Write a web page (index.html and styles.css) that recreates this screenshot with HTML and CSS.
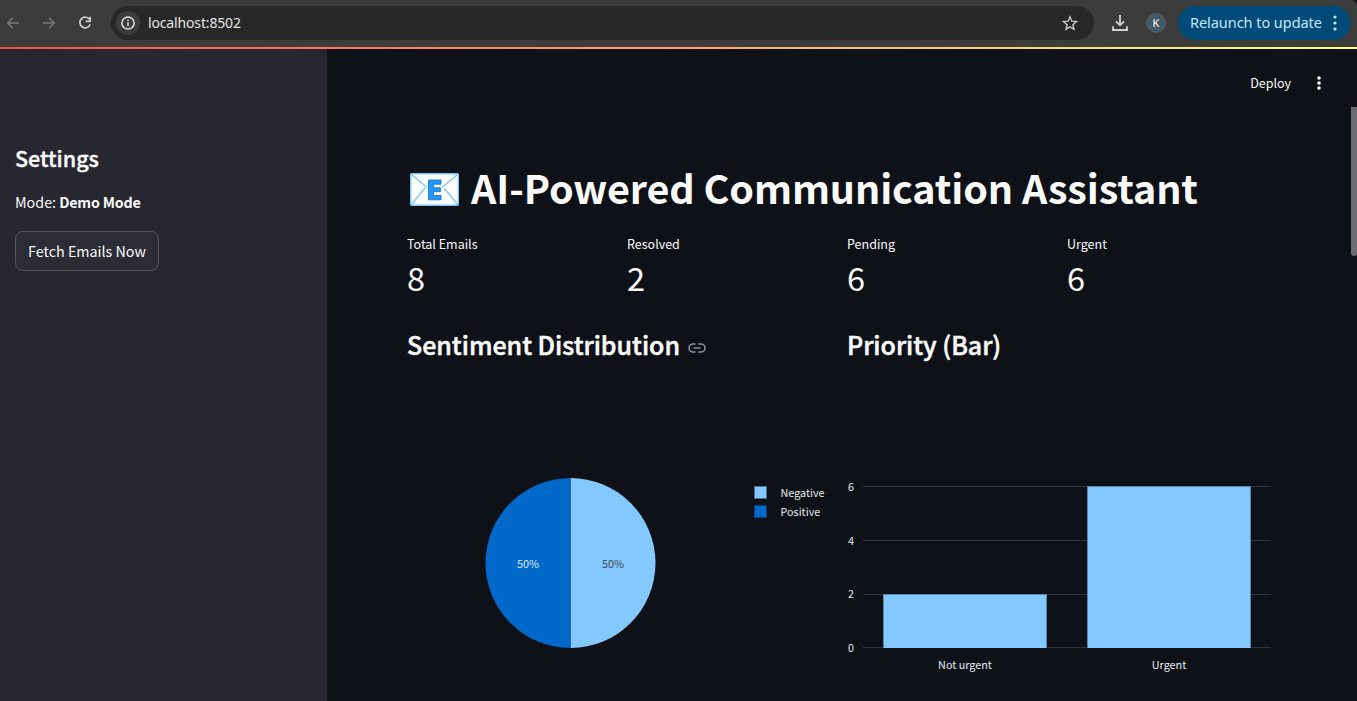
FILE: index.html
```html
<!DOCTYPE html>
<html lang="en">
<head>
<meta charset="utf-8">
<title>AI-Powered Communication Assistant</title>
<link rel="stylesheet" href="styles.css">
</head>
<body>
<header class="browser">
  <svg class="nav-icon" viewBox="0 0 24 24"><path d="M20 12H5M12 5l-7 7 7 7"/></svg>
  <svg class="nav-icon" viewBox="0 0 24 24"><path d="M4 12h15M12 5l7 7-7 7"/></svg>
  <svg class="reload" viewBox="0 0 16 16"><path d="M12.6 4.6A5.3 5.3 0 1 0 13.2 9.2"/><path d="M13.2 1.8v4.6H8.6"/></svg>
  <div class="omnibox">
    <span class="site-info"><svg viewBox="0 0 14 14"><circle cx="7" cy="7" r="6.1"/><path d="M7 6.2v4M7 3.6v1.5"/></svg></span>
    <span class="url">localhost:8502</span>
    <svg class="star" viewBox="0 0 16 16"><path d="M8 1.8l1.8 4.4 4.7.4-3.6 3.1 1.1 4.600L8 11.800l-4 2.500 1.100-4.600L1.500 6.600l4.700-.4z"/></svg>
  </div>
  <svg class="download" viewBox="0 0 16 16"><path d="M8 0v10M4 6.300l4 4 4-4M1 11.300v3.700h14v-3.700"/></svg>
  <span class="avatar"><span class="initial">K</span></span>
  <div class="relaunch"><span class="relaunch-text">Relaunch to update</span><svg class="dots" viewBox="0 0 4 16"><circle cx="2" cy="2" r="1.600"/><circle cx="2" cy="8" r="1.600"/><circle cx="2" cy="14" r="1.600"/></svg></div>
</header>
<div class="decoration"></div>
<div class="app">
  <aside class="sidebar">
    <h2 class="side-title">Settings</h2>
    <p class="mode">Mode: <strong>Demo Mode</strong></p>
    <button class="fetch">Fetch Emails Now</button>
  </aside>
  <main class="main">
    <div class="toolbar"><span class="deploy">Deploy</span><svg class="menu" viewBox="0 0 4 14"><circle cx="2" cy="2" r="1.800"/><circle cx="2" cy="7" r="1.800"/><circle cx="2" cy="12" r="1.800"/></svg></div>
    <div class="content">
      <h1 class="title">
        <svg class="mail" viewBox="0 0 49 33"><rect x=".7" y=".7" width="47.600" height="31.600" rx="1" fill="#fff" stroke="#7cc8f4" stroke-width="1.400"/><path d="M1 1l16 13.500M48 1L32 14.500M1 32l14-17M48 32L34 15" fill="none" stroke="#7cc8f4" stroke-width="1.300"/><path d="M18.500 7H31v4.200h-7.600v3.500h7v4h-7v3.800H31v4.300H18.500z" fill="#2196f3" stroke="#1976d2" stroke-width=".9"/></svg>
        <span class="title-text">AI-Powered Communication Assistant</span>
      </h1>
      <section class="metrics">
        <div><p class="label">Total Emails</p><p class="value">8</p></div>
        <div><p class="label">Resolved</p><p class="value">2</p></div>
        <div><p class="label">Pending</p><p class="value">6</p></div>
        <div><p class="label">Urgent</p><p class="value">6</p></div>
      </section>
      <section class="charts">
        <div class="chart">
          <h2 class="chart-title"><span>Sentiment Distribution</span><svg class="link" viewBox="0 0 18 10"><path d="M7.500 1H5a4 4 0 0 0 0 8h2.500M10.500 1H13a4 4 0 0 1 0 8h-2.500M5.500 5h7"/></svg></h2>
          <svg class="plot" viewBox="0 0 424 306">
            <path d="M163.500 103a85 85 0 0 0 0 170z" fill="#0068c9"/>
            <path d="M163.500 103a85 85 0 0 1 0 170z" fill="#83c9ff"/>
            <path d="M163.500 103v170" stroke="#2b6cae"/>
            <text class="tick pct-light" x="121" y="193" text-anchor="middle">50%</text>
            <text class="tick pct-dark" x="206" y="193" text-anchor="middle">50%</text>
            <rect x="347.500" y="111.500" width="12" height="12" fill="#83c9ff" stroke="#49708f"/>
            <rect x="347.500" y="130.500" width="12" height="12" fill="#0068c9" stroke="#074079"/>
            <text class="tick" x="373.500" y="122">Negative</text>
            <text class="tick" x="373.500" y="141">Positive</text>
          </svg>
        </div>
        <div class="chart">
          <h2 class="chart-title"><span>Priority (Bar)</span></h2>
          <svg class="plot" viewBox="0 0 424 306">
            <path d="M16 111.500h408M16 165.500h408M16 219.500h408M16 272.500h408" stroke="#31333f"/>
            <path d="M36 219h164v54H36zM240 111h164v162H240z" fill="#83c9ff"/>
            <path d="M36.500 273v-53.500h163V273M240.500 273V111.500h163V273" fill="none" stroke="#5584a9"/>
            <text class="tick" x="7" y="116" text-anchor="end">6</text>
            <text class="tick" x="7" y="170" text-anchor="end">4</text>
            <text class="tick" x="7" y="223" text-anchor="end">2</text>
            <text class="tick" x="7" y="277" text-anchor="end">0</text>
            <text class="tick" x="118" y="294" text-anchor="middle">Not urgent</text>
            <text class="tick" x="322" y="294" text-anchor="middle">Urgent</text>
          </svg>
        </div>
      </section>
    </div>
    <div class="scrollbar"></div>
  </main>
</div>
</body>
</html>
```
FILE: styles.css
```css
* { box-sizing: border-box; margin: 0; padding: 0; }
body { width: 1357px; height: 701px; overflow: hidden; display: flex; flex-direction: column; background: #0e1117; color: #fafafa; font-family: "Noto Sans CJK SC", sans-serif; white-space: nowrap; }
svg { display: block; flex: none; fill: none; overflow: visible; }
.browser { height: 47px; flex: none; background: #3c3c3c; display: flex; align-items: center; padding: 0 6px 1px 4px; border-top-right-radius: 6px; font-family: "Noto Sans", sans-serif; }
.nav-icon { width: 18px; height: 18px; margin-right: 18px; stroke: #777; stroke-width: 2; }
.reload { width: 16px; height: 16px; margin: 0 18px 0 1px; stroke: #d0d0d0; stroke-width: 1.7; }
.omnibox { width: 983px; height: 34px; border-radius: 17px; background: #282828; display: flex; align-items: center; padding: 0 16px 0 5px; }
.site-info { width: 24px; height: 24px; border-radius: 50%; background: #3c3c3c; display: grid; place-items: center; }
.site-info svg { width: 14px; height: 14px; stroke: #e0e0e0; stroke-width: 1.5; }
.url { margin-left: 8px; padding-bottom: 2px; font-size: 14px; letter-spacing: -0.15px; color: #e3e3e3; flex: 1; }
.star { width: 16px; height: 16px; stroke: #c7c7c7; stroke-width: 1.4; }
.download { width: 16px; height: 16px; margin-left: 18px; stroke: #d0d0d0; stroke-width: 1.8; }
.avatar { width: 20px; height: 20px; margin-left: 18px; border-radius: 50%; background: #455a64; color: #fff; font-size: 11px; line-height: 18px; display: grid; place-items: center; }
.initial { padding-bottom: 1px; }
.relaunch { width: 173px; height: 34px; margin-left: 12px; border-radius: 17px; background: #004a77; color: #c2e7ff; font-size: 14.500px; letter-spacing: -0.05px; display: flex; align-items: center; justify-content: space-between; padding: 0 14px 0 12px; }
.relaunch-text { padding-bottom: 2px; }
.dots { width: 4px; height: 16px; fill: #c2e7ff; }
.decoration { height: 2px; flex: none; background: linear-gradient(90deg, #ff4b4b, #fffd80); }
.app { flex: 1; display: flex; min-height: 0; }
.sidebar { width: 327px; background: #262730; padding: 91px 15px 0; }
.side-title { font-size: 21.500px; line-height: 36px; font-weight: 500; -webkit-text-stroke: 0.4px #fafafa; }
.mode { font-size: 14.300px; line-height: 24px; margin-top: 14px; }
.mode strong { letter-spacing: -0.2px; }
.fetch { margin-top: 17px; width: 144px; height: 40px; border: 1px solid #53545e; border-radius: 8px; background: #2b2c36; color: #fafafa; font: 14.300px/22px "Noto Sans CJK SC", sans-serif; white-space: nowrap; }
.main { flex: 1; display: grid; grid-template-columns: 1fr 6px; grid-template-rows: 57px 1fr; }
.toolbar { grid-column: 1 / 3; display: flex; align-items: center; justify-content: flex-end; padding: 10px 36px 0 0; gap: 26px; }
.deploy { font-size: 12.500px; line-height: 20px; }
.menu { width: 4px; height: 14px; fill: #fafafa; }
.content { padding: 57px 0 0 80px; }
.scrollbar { width: 6px; height: 149px; margin-top: 1px; background: #6b6c70; border-radius: 0 0 3px 3px; }
.title { height: 53px; display: flex; align-items: center; padding-left: 3px; font-size: 39.500px; line-height: 53px; font-weight: 700; }
.title-text { padding-bottom: 7px; letter-spacing: -0.1px; }
.mail { width: 49px; height: 33px; margin-right: 12px; }
.metrics { display: grid; grid-template-columns: repeat(4, 204px); gap: 16px; margin-top: 18px; }
.label { font-size: 12.500px; line-height: 20px; }
.value { font-size: 32.500px; line-height: 45px; height: 50px; }
.charts { display: grid; grid-template-columns: 424px 424px; gap: 16px; margin-top: 20px; }
.chart-title { display: flex; align-items: center; height: 40px; font-size: 25px; line-height: 40px; font-weight: 500; letter-spacing: -0.03px; -webkit-text-stroke: 0.5px #fafafa; }
.link { width: 18px; height: 10px; margin: 7px 0 0 8px; stroke: #8b8d92; stroke-width: 1.6; }
.plot { width: 424px; height: 306px; margin-top: 11px; }
.tick { font-family: "Noto Sans CJK SC", sans-serif; font-size: 10.800px; fill: #e6eaf1; }
.pct-dark { fill: #444; }
```
